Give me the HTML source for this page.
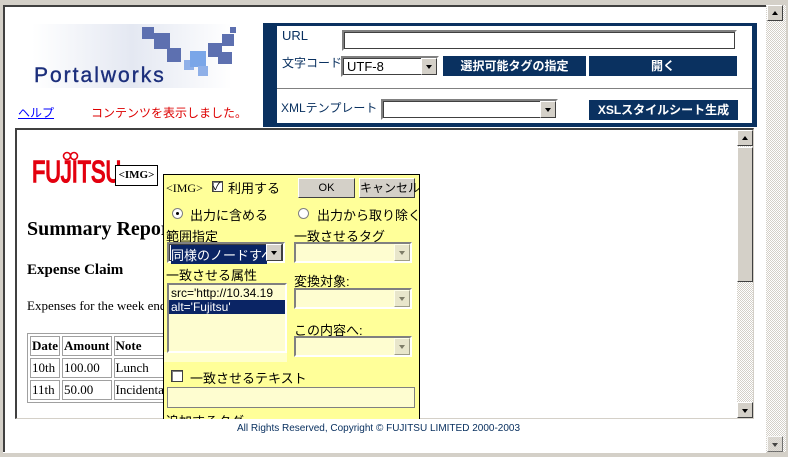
<!DOCTYPE html>
<html><head><meta charset="utf-8">
<style>
*{margin:0;padding:0;box-sizing:border-box}
body{width:788px;height:457px;overflow:hidden;background:#d4d0c8;position:relative;font-family:"Liberation Sans","Noto Sans CJK JP",sans-serif;font-size:12px}
.a{position:absolute;white-space:nowrap}
.j{font-family:"Liberation Sans","Noto Sans CJK JP",sans-serif}
.s{font-family:"Liberation Serif","Noto Serif CJK SC",serif}
.btnb{background:#0a3160;color:#fff;font-weight:bold;font-size:12px;text-align:center;line-height:20px}
.sel{background:#fff;border:2px solid;border-color:#808080 #fff #fff #808080;outline:1px solid #404040;outline-offset:-3px}
.arr{position:absolute;width:16px;background:#d4d0c8;border:1px solid;border-color:#fff #404040 #404040 #fff}
.arr:after{content:"";position:absolute;left:4px;top:6px;border-left:3px solid transparent;border-right:3px solid transparent}
.dn:after{border-top:4px solid #000}
.up:after{border-bottom:4px solid #000;top:5px}
.chk{position:absolute;background:#fff;border:1px solid #404040;box-shadow:inset 1px 1px #808080}
.dis{background:#fefdd0;border:2px solid;border-color:#808080 #fff #fff #808080}
.checker{background:repeating-conic-gradient(#d4d0c8 0 25%,#fff 0 50%) 0 0/2px 2px}
</style></head><body>
<div class="a" style="left:3px;top:5px;width:763px;height:447px;background:#fff;border-left:2px solid #404040;border-top:2px solid #404040"></div>
<div class="a checker" style="left:766px;top:5px;width:20px;height:447px"></div>
<div class="arr up" style="left:767px;top:5px;height:16px"></div>
<div class="arr dn" style="left:767px;top:436px;height:16px;opacity:.7"></div>

<svg class="a" style="left:22px;top:20px" width="220" height="72">
<defs><linearGradient id="g" x1="0" x2="1"><stop offset="0" stop-color="#fff"/><stop offset=".5" stop-color="#e4e8f2"/><stop offset="1" stop-color="#fff"/></linearGradient></defs>
<rect x="10" y="4" width="200" height="64" fill="url(#g)"/>
<g fill="#5d70b0"><rect x="120" y="7" width="12" height="12"/><rect x="132" y="13" width="16" height="16"/><rect x="145" y="28" width="14" height="14"/><rect x="162" y="40" width="10" height="10" fill="#8fb0e8"/><rect x="168" y="31" width="16" height="16" fill="#7aa6e8"/><rect x="186" y="23" width="14" height="14"/><rect x="200" y="14" width="12" height="12"/><rect x="196" y="32" width="14" height="12"/><rect x="176" y="46" width="10" height="10" fill="#8fb0e8"/><rect x="208" y="7" width="6" height="6"/></g>
<text x="12" y="62" font-family="Liberation Sans" font-size="21" letter-spacing="2" fill="#1c2f7c" stroke="#1c2f7c" stroke-width=".4">Portalworks</text>
</svg>
<div class="a j" style="left:18px;top:104px;color:#00f;text-decoration:underline;font-size:12px">ヘルプ</div>
<div class="a j" style="left:91px;top:104px;color:#d00;font-size:12px">コンテンツを表示しました。</div>

<div class="a" style="left:263px;top:23px;width:494px;height:104px;background:#0a3160"></div>
<div class="a" style="left:277px;top:26px;width:475px;height:97px;background:#fff"></div>
<div class="a" style="left:277px;top:88px;width:475px;height:1px;background:#808080"></div>
<div class="a j" style="left:282px;top:28px;color:#0a3160;font-size:13px">URL</div>
<div class="a sel" style="left:342px;top:30px;width:395px;height:21px"></div>
<div class="a j" style="left:282px;top:54px;color:#0a3160;font-size:12px">文字コード</div>
<div class="a sel" style="left:341px;top:56px;width:98px;height:21px"><span style="position:absolute;left:4px;top:1px;font-size:13px">UTF-8</span></div>
<div class="arr dn" style="left:421px;top:58px;height:17px"></div>
<div class="a btnb j" style="left:443px;top:56px;width:143px;height:20px">選択可能タグの指定</div>
<div class="a btnb j" style="left:589px;top:56px;width:148px;height:20px">開く</div>
<div class="a j" style="left:281px;top:99px;color:#0a3160;font-size:12px">XMLテンプレート</div>
<div class="a sel" style="left:381px;top:99px;width:177px;height:21px"></div>
<div class="arr dn" style="left:540px;top:101px;height:17px"></div>
<div class="a btnb j" style="left:589px;top:100px;width:149px;height:20px">XSLスタイルシート生成</div>

<div class="a" style="left:15px;top:128px;width:739px;height:291px;border-left:2px solid #404040;border-top:2px solid #404040;border-bottom:1px solid #d4d0c8;border-right:1px solid #d4d0c8"></div>
<div class="a checker" style="left:737px;top:130px;width:16px;height:288px"></div>
<div class="arr up" style="left:737px;top:130px;height:16px"></div>
<div class="a" style="left:737px;top:147px;width:16px;height:135px;background:#d4d0c8;border:1px solid;border-color:#fff #404040 #404040 #fff"></div>
<div class="arr dn" style="left:737px;top:402px;height:16px"></div>

<div class="a" style="left:32px;top:155px;color:#e3000f;font-size:31px;line-height:34px;font-family:'Liberation Sans',sans-serif;-webkit-text-stroke:1.6px #e3000f;transform:scaleX(.7);transform-origin:left">FUJITSU</div>
<svg class="a" style="left:62px;top:150px" width="18" height="12"><ellipse cx="5" cy="6" rx="3.5" ry="3.5" fill="none" stroke="#e3000f" stroke-width="1.6"/><ellipse cx="12" cy="6" rx="3.5" ry="3.5" fill="none" stroke="#e3000f" stroke-width="1.6"/></svg>
<div class="a s" style="left:115px;top:165px;width:43px;height:21px;border:1px solid #000;background:#fff;font-weight:bold;font-size:11px;line-height:19px;text-align:center">&lt;IMG&gt;</div>
<div class="a s" style="left:27px;top:218px;font-weight:bold;font-size:20px">Summary Report</div>
<div class="a s" style="left:27px;top:262px;font-weight:bold;font-size:15px">Expense Claim</div>
<div class="a s" style="left:27px;top:298px;font-size:13px">Expenses for the week ending</div>
<table class="a s" style="left:27px;top:333px;border-collapse:separate;border-spacing:2px;border:1px solid #a0a0a0;font-size:13px">
<tr><td style="border:1px solid #a0a0a0;padding:1px 1px;font-weight:bold;width:28px">Date</td><td style="border:1px solid #a0a0a0;padding:1px;font-weight:bold;width:46px">Amount</td><td style="border:1px solid #a0a0a0;padding:1px;font-weight:bold;width:80px">Note</td></tr>
<tr><td style="border:1px solid #a0a0a0;padding:1px">10th</td><td style="border:1px solid #a0a0a0;padding:1px">100.00</td><td style="border:1px solid #a0a0a0;padding:1px">Lunch</td></tr>
<tr><td style="border:1px solid #a0a0a0;padding:1px">11th</td><td style="border:1px solid #a0a0a0;padding:1px">50.00</td><td style="border:1px solid #a0a0a0;padding:1px">Incidentals</td></tr>
</table>

<div class="a" style="left:163px;top:174px;width:257px;height:245px;background:#ffff99;border-left:1px solid #000;border-top:1px solid #000;border-right:1px solid #000;overflow:hidden">
<div class="a s" style="left:2px;top:6px;font-size:12px">&lt;IMG&gt;</div>
<div class="chk" style="left:48px;top:6px;width:11px;height:11px"><span style="position:absolute;left:0;top:-4px;font-size:11px">✓</span></div>
<div class="a j" style="left:64px;top:3px;font-size:13px">利用する</div>
<div class="a j" style="left:134px;top:3px;width:57px;height:20px;background:#d4d0c8;border:1px solid;border-color:#fff #404040 #404040 #fff;text-align:center;line-height:18px;font-size:11px">OK</div>
<div class="a j" style="left:195px;top:3px;width:56px;height:20px;background:#d4d0c8;border:1px solid;border-color:#fff #404040 #404040 #fff;text-align:center;line-height:18px;font-size:12px">キャンセル</div>
<div class="a" style="left:8px;top:33px;width:11px;height:11px;border-radius:50%;background:#fff;border:1px solid #808080"><div style="position:absolute;left:3px;top:3px;width:3px;height:3px;background:#000;border-radius:50%"></div></div>
<div class="a j" style="left:26px;top:30px;font-size:13px">出力に含める</div>
<div class="a" style="left:134px;top:33px;width:11px;height:11px;border-radius:50%;background:#fff;border:1px solid #808080"></div>
<div class="a j" style="left:153px;top:30px;font-size:13px">出力から取り除く</div>
<div class="a j" style="left:2px;top:51px;font-size:13px">範囲指定</div>
<div class="a j" style="left:130px;top:51px;font-size:13px">一致させるタグ</div>
<div class="a sel" style="left:3px;top:67px;width:118px;height:21px"><span style="position:absolute;left:2px;top:1px;background:#0a2464;color:#fff;font-size:13px;width:96px;overflow:hidden">同様のノードすべて</span></div>
<div class="arr dn" style="left:102px;top:69px;height:17px"></div>
<div class="a dis" style="left:130px;top:67px;width:118px;height:21px"></div>
<div class="arr dn" style="left:230px;top:69px;height:17px;opacity:.5"></div>
<div class="a j" style="left:2px;top:90px;font-size:13px">一致させる属性</div>
<div class="a" style="left:0;top:177px;width:123px;height:10px;background:#ffffcc"></div>
<div class="a" style="left:3px;top:108px;width:120px;height:70px;background:#fefdd0;border:2px solid;border-color:#808080 #fff #fff #808080;overflow:hidden;font-size:12px">
<div style="padding:1px 0 0 2px;white-space:nowrap">src='http://10.34.19</div>
<div style="background:#0a2464;color:#fff;padding:0 2px">alt='Fujitsu'</div></div>
<div class="a j" style="left:130px;top:96px;font-size:13px">変換対象:</div>
<div class="a dis" style="left:130px;top:113px;width:118px;height:21px"></div>
<div class="arr dn" style="left:230px;top:115px;height:17px;opacity:.5"></div>
<div class="a j" style="left:130px;top:145px;font-size:13px">この内容へ:</div>
<div class="a dis" style="left:130px;top:161px;width:118px;height:21px"></div>
<div class="arr dn" style="left:230px;top:163px;height:17px;opacity:.5"></div>
<div class="chk" style="left:7px;top:195px;width:12px;height:12px"></div>
<div class="a j" style="left:26px;top:193px;font-size:13px">一致させるテキスト</div>
<div class="a" style="left:3px;top:212px;width:248px;height:21px;background:#fefdd0;border:1px solid #808080"></div>
<div class="a j" style="left:2px;top:236px;font-size:13px">追加するタグ</div>
</div>

<div class="a j" style="left:237px;top:423px;color:#0a3160;font-size:10px">All Rights Reserved, Copyright © FUJITSU LIMITED 2000-2003</div>
<div class="a" style="left:3px;top:452px;width:763px;height:5px;background:#d4d0c8;border-top:1px solid #fff"></div>
</body></html>
